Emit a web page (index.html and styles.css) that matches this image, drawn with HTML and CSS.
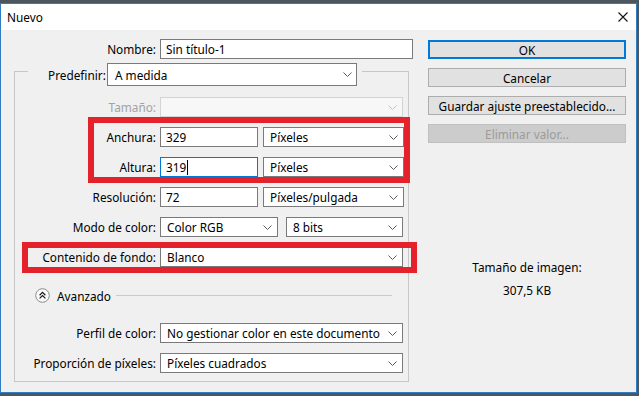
FILE: index.html
```html
<!DOCTYPE html>
<html lang="es">
<head>
<meta charset="utf-8">
<title>Nuevo</title>
<link rel="stylesheet" href="styles.css">
</head>
<body>
<div class="window">
  <div class="titlebar">
    <span class="title">Nuevo</span>
    <svg class="close" width="10" height="10" viewBox="0 0 10 10"><path d="M0.5 0.5L9.5 9.5M9.5 0.5L0.5 9.5" stroke="#111" stroke-width="1.1" fill="none"/></svg>
  </div>
  <div class="content">
    <div class="form">
      <div class="row name-row">
        <span class="lbl">Nombre:</span>
        <div class="box input w-name">Sin título-1</div>
      </div>
      <div class="group">
        <div class="legend">
          <span class="lbl lbl-preset">Predefinir:</span>
          <div class="box select w-preset"><span>A medida</span><svg class="chev" width="9" height="5" viewBox="0 0 9 5"><polyline points="0.5,0.5 4.5,4.5 8.5,0.5"/></svg></div>
        </div>
        <div class="row row-first">
          <span class="lbl dis">Tamaño:</span>
          <div class="box select disabled w-full"><span></span><svg class="chev" width="9" height="5" viewBox="0 0 9 5"><polyline points="0.5,0.5 4.5,4.5 8.5,0.5"/></svg></div>
        </div>
        <div class="row">
          <span class="lbl">Anchura:</span>
          <div class="box input w-num">329</div>
          <div class="box select w-unit"><span>Píxeles</span><svg class="chev" width="9" height="5" viewBox="0 0 9 5"><polyline points="0.5,0.5 4.5,4.5 8.5,0.5"/></svg></div>
        </div>
        <div class="row">
          <span class="lbl">Altura:</span>
          <div class="box input focus w-num">319<span class="caret"></span></div>
          <div class="box select w-unit"><span>Píxeles</span><svg class="chev" width="9" height="5" viewBox="0 0 9 5"><polyline points="0.5,0.5 4.5,4.5 8.5,0.5"/></svg></div>
        </div>
        <div class="row">
          <span class="lbl">Resolución:</span>
          <div class="box input w-num">72</div>
          <div class="box select w-unit"><span>Píxeles/pulgada</span><svg class="chev" width="9" height="5" viewBox="0 0 9 5"><polyline points="0.5,0.5 4.5,4.5 8.5,0.5"/></svg></div>
        </div>
        <div class="row">
          <span class="lbl">Modo de color:</span>
          <div class="box select w-mode"><span>Color RGB</span><svg class="chev" width="9" height="5" viewBox="0 0 9 5"><polyline points="0.5,0.5 4.5,4.5 8.5,0.5"/></svg></div>
          <div class="box select w-bits"><span>8 bits</span><svg class="chev" width="9" height="5" viewBox="0 0 9 5"><polyline points="0.5,0.5 4.5,4.5 8.5,0.5"/></svg></div>
        </div>
        <div class="row">
          <span class="lbl">Contenido de fondo:</span>
          <div class="box select w-full"><span>Blanco</span><svg class="chev" width="9" height="5" viewBox="0 0 9 5"><polyline points="0.5,0.5 4.5,4.5 8.5,0.5"/></svg></div>
        </div>
        <div class="advanced">
          <svg class="adv-icon" width="15" height="15" viewBox="0 0 15 15"><circle cx="7.5" cy="7.5" r="6.8" fill="#fafafa" stroke="#8c8c8c" stroke-width="1"/><polyline points="4.6,7.2 7.5,4.4 10.4,7.2" fill="none" stroke="#1a1a1a" stroke-width="1.2"/><polyline points="4.6,10.4 7.5,7.6 10.4,10.4" fill="none" stroke="#1a1a1a" stroke-width="1.2"/></svg>
          <span class="adv-text">Avanzado</span>
          <span class="adv-line"></span>
        </div>
        <div class="row row-profile">
          <span class="lbl">Perfil de color:</span>
          <div class="box select w-full"><span>No gestionar color en este documento</span><svg class="chev" width="9" height="5" viewBox="0 0 9 5"><polyline points="0.5,0.5 4.5,4.5 8.5,0.5"/></svg></div>
        </div>
        <div class="row">
          <span class="lbl">Proporción de píxeles:</span>
          <div class="box select w-full"><span>Píxeles cuadrados</span><svg class="chev" width="9" height="5" viewBox="0 0 9 5"><polyline points="0.5,0.5 4.5,4.5 8.5,0.5"/></svg></div>
        </div>
        <div class="hl hl-size"></div>
        <div class="hl hl-bg"></div>
      </div>
    </div>
    <div class="side">
      <div class="btn btn-default">OK</div>
      <div class="btn">Cancelar</div>
      <div class="btn">Guardar ajuste preestablecido...</div>
      <div class="btn btn-disabled">Eliminar valor...</div>
      <div class="info">
        <div>Tamaño de imagen:</div>
        <div class="info-size">307,5 KB</div>
      </div>
    </div>
  </div>
</div>
</body>
</html>
```

FILE: styles.css
```css
* { box-sizing: border-box; }
html, body { margin: 0; padding: 0; }
body {
  width: 639px;
  height: 396px;
  overflow: hidden;
  background: #4b5661;
  font-family: "Noto Sans", "Segoe UI", sans-serif;
  font-size: 11.8px;
  line-height: 16px;
  color: #000;
}
.window {
  margin-top: 3px;
  width: 637px;
  height: 390px;
  border: 1px solid #2f7cc3;
  background: #f0f0f0;
  display: flex;
  flex-direction: column;
}
.titlebar {
  height: 26px;
  background: #fff;
  display: flex;
  align-items: center;
  justify-content: space-between;
  padding: 0 8px 1px 6px;
}
.content {
  flex: 1;
  display: flex;
}
.form {
  width: 427px;
  padding-top: 9px;
}
.row {
  display: flex;
  align-items: center;
  height: 20px;
  margin-top: 10px;
}
.name-row { margin-top: 0; }
.lbl {
  flex: none;
  text-align: right;
  white-space: nowrap;
  margin-right: 4px;
}
.name-row .lbl { width: 155px; }
.group .lbl { width: 141px; }
.lbl.dis { color: #a2a2a2; }
.box {
  height: 20px;
  border: 1px solid #7a7a7a;
  background: #fff;
  white-space: nowrap;
  overflow: hidden;
  display: flex;
  align-items: center;
}
.input { padding-left: 5px; }
.input.focus { border-color: #0078d7; }
.caret {
  display: inline-block;
  width: 1px;
  height: 15px;
  background: #000;
  margin-left: 1px;
}
.select {
  justify-content: space-between;
  padding: 0 5px 0 6px;
}
.select.disabled {
  background: #f7f7f7;
  border-color: #d4d4d4;
}
.select.disabled .chev polyline { stroke: #c4c4c4; }
.chev { flex: none; }
.chev polyline { fill: none; stroke: #5c5c5c; stroke-width: 1; }
.w-name { width: 253px; }
.w-full { width: 243px; }
.w-num { width: 98px; }
.w-unit { width: 141px; margin-left: 5px; }
.w-mode { width: 118px; }
.w-bits { width: 117px; margin-left: 8px; }
.group {
  position: relative;
  margin: 12px 0 0 13px;
  width: 395px;
  border: 1px solid #c7c7c7;
  padding-bottom: 8px;
}
.legend {
  display: flex;
  align-items: center;
  width: fit-content;
  margin: -9px 0 0 13px;
  padding: 0 5px 0 20px;
  background: #f0f0f0;
}
.group .lbl-preset { width: 54px; margin-right: 5px; }
.w-preset { width: 250px; height: 23px; padding-left: 7px; padding-right: 4px; }
.row-first { margin-top: 11px; }
.advanced {
  display: flex;
  align-items: center;
  height: 15px;
  margin-top: 21px;
  padding-left: 20px;
  padding-right: 16px;
}
.adv-icon { flex: none; }
.adv-text { margin-left: 7px; margin-right: 5px; }
.adv-line { flex: 1; height: 1px; background: #cacaca; }
.row-profile { margin-top: 20px; }
.hl {
  position: absolute;
  border: 6px solid #e3222b;
}
.hl-size { left: 73px; top: 45px; width: 322px; height: 66px; }
.hl-bg { left: 7px; top: 170px; width: 395px; height: 31px; }
.side {
  width: 198px;
  padding-top: 10px;
}
.btn {
  height: 19px;
  margin-bottom: 9px;
  border: 1px solid #adadad;
  background: #e1e1e1;
  display: flex;
  align-items: center;
  justify-content: center;
  white-space: nowrap;
}
.btn-default { border: 2px solid #0078d7; }
.btn-disabled {
  background: #cccccc;
  border-color: #bfbfbf;
  color: #9b9b9b;
}
.info {
  margin-top: 116px;
  text-align: center;
}
.info-size { margin-top: 7px; }
```
